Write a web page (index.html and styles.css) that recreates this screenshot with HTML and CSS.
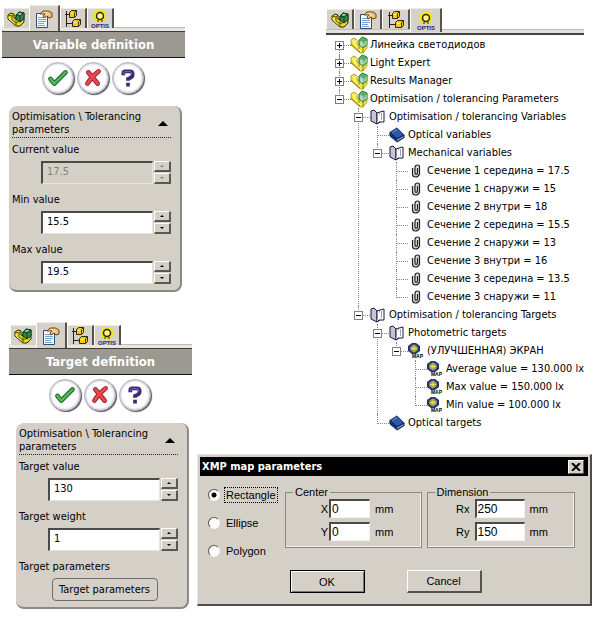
FILE: index.html
```html
<!DOCTYPE html>
<html lang="en">
<head>
<meta charset="utf-8">
<title>Optimisation parameters</title>
<link rel="stylesheet" href="styles.css">
</head>
<body>
<svg class="sprite" aria-hidden="true">
  <symbol id="part" viewBox="0 0 18 18">
    <path d="M1 5 4 3 7 4V8L9 9V5L12 2 17 3V12L13 16H9L1 9Z" fill="#eadb22" stroke="#2c2806"/>
    <path d="M1 5 5 6V10L9 13V16M5 6 7 4M9 9V13L13 11" fill="none" stroke="#5c5410"/>
    <path d="M9 5 12 2 17 3V9L13 12 9 9Z" fill="#2f8a4c" stroke="#143c20"/>
    <path d="M9 5 13 6V12M13 6 17 3" fill="none" stroke="#143c20"/>
    <path d="M11 4 12.500 3 15 3.500 13 5Z" fill="#b8dcc0"/>
    <path d="M2 7V8.500L7 13" fill="none" stroke="#fff7a0"/>
  </symbol>
  <symbol id="assembly" viewBox="0 0 18 18">
    <path d="M1 4 4 2 7 4V8L9 9V4L12 1 17 3V12L13 17H10L1 9Z" fill="#f4e636" stroke="#b4a628"/>
    <path d="M2 4.500 5 6V10L11 15M5 6 7 4" fill="none" stroke="#fffcb4"/>
    <path d="M1 8 10 16M13 11V17M9 9V13" fill="none" stroke="#8c8128"/>
    <path d="M9 4 12 1 17 3V9L13 12 9 9Z" fill="#58ad68" stroke="#3f8a4c"/>
    <path d="M10 5 13 6V11L10 9Z" fill="#e4f3e2"/>
    <path d="M14 7V10M16 5V9" stroke="#d9f0d8"/>
    <path d="M11 5V9M13 6V11" stroke="#7db887"/>
  </symbol>
  <symbol id="properties" viewBox="0 0 18 18">
    <path d="M1.500 3.500H12.500V17.500H1.500Z" fill="#f4faff" stroke="#28507c"/>
    <path d="M3 7.500H11M3 9.500H11M3 11.500H11M3 13.500H9M3 15.500H10" stroke="#7aa4d0"/>
    <path d="M5 4 8 1H14L17 3V7L14 8 12 6 9 8 8 6 10 4Z" fill="#e8bd82" stroke="#704818"/>
    <path d="M9 2.500H13M11 4.500H14" stroke="#fbe3b8"/>
  </symbol>
  <symbol id="config" viewBox="0 0 18 18">
    <path d="M2.500 1V17M1 4.500H6M2.500 13.500H9" fill="none" stroke="#222"/>
    <path d="M5.500 2.500 7.500 .5H12.500V5.500L10.500 7.500H5.500ZM8.500 11.500 10.500 9.500H16.500V14.500L14.500 16.500H8.500Z" fill="#f3c820" stroke="#302800"/>
    <path d="M10.500 7.500V2.500L12.500 .5M14.500 16.500V11.500L16.500 9.500" fill="none" stroke="#4e3f08"/>
    <path d="M7 3.500H9M10 12.500H13" stroke="#fff29a"/>
  </symbol>
  <symbol id="optis" viewBox="0 0 20 20">
    <path d="M7 1H13L16 4V10L13 13H7L4 10V4Z" fill="#f2e713"/>
    <circle cx="10" cy="7" r="3.500" fill="#fff58a" stroke="#28250c" stroke-width="1.500"/>
    <path d="M8 11V13M12 11V13" stroke="#28250c"/>
    <text x="10" y="19" text-anchor="middle" class="optis-text">OPTIS</text>
  </symbol>
  <symbol id="open-book" viewBox="0 0 16 16">
    <path d="M1 2 4 1 7 4V15L1 12Z" fill="#c4c4d4" stroke="#181840"/>
    <path d="M7 4 10 3V13L7 15Z" fill="#fff" stroke="#181840"/>
    <path d="M10 3 14 2V13H9L7 15" fill="#fff" stroke="#181840"/>
    <path d="M11.500 4V11" stroke="#a0a0b8"/>
  </symbol>
  <symbol id="closed-book" viewBox="0 0 18 16">
    <path d="M1 5 9 0 17 8 9 12Z" fill="#2d57ab" stroke="#12245c"/>
    <path d="M1 5V9L9 16 17 11V8L9 12Z" fill="#17306e" stroke="#12245c"/>
    <path d="M9 14 16 10" stroke="#d2daec"/>
    <path d="M4 5 9 2" stroke="#7094d8"/>
  </symbol>
  <symbol id="clip" viewBox="0 0 10 14">
    <path d="M1.500 4V10Q1.500 13 4.500 13T8.500 10V3Q8.500 1 6.500 1T4 3V9Q4 10.500 5 10.500T6.500 9V4" fill="#ddd" stroke="#222" stroke-width="1.200"/>
  </symbol>
  <symbol id="map" viewBox="0 0 16 16">
    <path d="M4 0H8L12 3V8L8 11H4L0 8V3Z" fill="#25306e"/>
    <path d="M5 1.500H7L10 4V7L7 9.500H5L2 7V4Z" fill="#7c8190"/>
    <path d="M6 2.500V8.500M3 5.500H9M4 3.500 8 7.500M8 3.500 4 7.500" stroke="#eee630"/>
    <text x="9.500" y="15" text-anchor="middle" class="map-text">MAP</text>
  </symbol>
  <symbol id="check" viewBox="0 0 32 32">
    <path d="M8 17 12 22 24 10" fill="none" stroke="#17632a" stroke-width="5" stroke-linecap="round" stroke-linejoin="round"/>
    <path d="M8 17 12 22 24 10" fill="none" stroke="#52b556" stroke-width="3" stroke-linecap="round" stroke-linejoin="round"/>
  </symbol>
  <symbol id="cross" viewBox="0 0 32 32">
    <path d="M11 10 21 22M22 9Q15 14 10 22" fill="none" stroke="#a3202c" stroke-width="5" stroke-linecap="round"/>
    <path d="M11 10 21 22M22 9Q15 14 10 22" fill="none" stroke="#e84850" stroke-width="3" stroke-linecap="round"/>
  </symbol>
  <symbol id="help" viewBox="0 0 32 32">
    <path d="M11 13V11Q11 9 13 9H18Q21 9 21 12T18 16L16 17V19M16 21V25" fill="none" stroke="#3c2a78" stroke-width="4"/>
    <path d="M11 12Q11 9 14 9H18Q20 9 20 12" fill="none" stroke="#7a68b8"/>
  </symbol>
</svg>

<main class="page">
  <div class="side">
    <section class="panel">
      <div class="tabs">
        <button class="tab" aria-label="Parts"><svg class="icon18"><use href="#part"/></svg></button>
        <button class="tab active" aria-label="Properties"><svg class="icon18"><use href="#properties"/></svg></button>
        <button class="tab" aria-label="Configurations"><svg class="icon18"><use href="#config"/></svg></button>
        <button class="tab" aria-label="Optis"><svg class="icon20"><use href="#optis"/></svg></button>
      </div>
      <h2 class="heading">Variable definition</h2>
      <div class="actions">
        <button class="round" aria-label="Accept"><svg><use href="#check"/></svg></button>
        <button class="round" aria-label="Reject"><svg><use href="#cross"/></svg></button>
        <button class="round" aria-label="Help"><svg><use href="#help"/></svg></button>
      </div>
      <div class="group">
        <button class="group-title"><span>Optimisation \ Tolerancing parameters</span><i class="collapse"></i></button>
        <label for="current">Current value</label>
        <div class="spin"><input id="current" value="17.5" disabled><div class="arrows"><button class="up" aria-label="Increase" disabled></button><button class="down" aria-label="Decrease" disabled></button></div></div>
        <label for="min">Min value</label>
        <div class="spin"><input id="min" value="15.5"><div class="arrows"><button class="up" aria-label="Increase"></button><button class="down" aria-label="Decrease"></button></div></div>
        <label for="max">Max value</label>
        <div class="spin"><input id="max" value="19.5"><div class="arrows"><button class="up" aria-label="Increase"></button><button class="down" aria-label="Decrease"></button></div></div>
      </div>
    </section>

    <section class="panel second">
      <div class="tabs">
        <button class="tab" aria-label="Parts"><svg class="icon18"><use href="#part"/></svg></button>
        <button class="tab active" aria-label="Properties"><svg class="icon18"><use href="#properties"/></svg></button>
        <button class="tab" aria-label="Configurations"><svg class="icon18"><use href="#config"/></svg></button>
        <button class="tab" aria-label="Optis"><svg class="icon20"><use href="#optis"/></svg></button>
      </div>
      <h2 class="heading">Target definition</h2>
      <div class="actions">
        <button class="round" aria-label="Accept"><svg><use href="#check"/></svg></button>
        <button class="round" aria-label="Reject"><svg><use href="#cross"/></svg></button>
        <button class="round" aria-label="Help"><svg><use href="#help"/></svg></button>
      </div>
      <div class="group">
        <button class="group-title"><span>Optimisation \ Tolerancing parameters</span><i class="collapse"></i></button>
        <label for="target">Target value</label>
        <div class="spin"><input id="target" value="130"><div class="arrows"><button class="up" aria-label="Increase"></button><button class="down" aria-label="Decrease"></button></div></div>
        <label for="weight">Target weight</label>
        <div class="spin"><input id="weight" value="1"><div class="arrows"><button class="up" aria-label="Increase"></button><button class="down" aria-label="Decrease"></button></div></div>
        <p class="caption">Target parameters</p>
        <button class="params">Target parameters</button>
      </div>
    </section>
  </div>

  <div class="content">
    <section class="browser">
      <div class="tabs tree-tabs">
        <button class="tab" aria-label="Parts"><svg class="icon18"><use href="#part"/></svg></button>
        <button class="tab" aria-label="Properties"><svg class="icon18"><use href="#properties"/></svg></button>
        <button class="tab" aria-label="Configurations"><svg class="icon18"><use href="#config"/></svg></button>
        <button class="tab active" aria-label="Optis"><svg class="icon20"><use href="#optis"/></svg></button>
      </div>
      <ul class="tree">
        <li><div class="row"><button class="toggle plus" aria-label="Expand"></button><svg class="icon18"><use href="#assembly"/></svg><span>Линейка светодиодов</span></div></li>
        <li><div class="row"><button class="toggle plus" aria-label="Expand"></button><svg class="icon18"><use href="#assembly"/></svg><span>Light Expert</span></div></li>
        <li><div class="row"><button class="toggle plus" aria-label="Expand"></button><svg class="icon18"><use href="#assembly"/></svg><span>Results Manager</span></div></li>
        <li><div class="row"><button class="toggle" aria-label="Collapse"></button><svg class="icon18"><use href="#assembly"/></svg><span>Optimisation / tolerancing Parameters</span></div>
          <ul>
            <li><div class="row"><button class="toggle" aria-label="Collapse"></button><svg class="icon16"><use href="#open-book"/></svg><span>Optimisation / tolerancing Variables</span></div>
              <ul>
                <li><div class="row"><i></i><svg class="icon16"><use href="#closed-book"/></svg><span>Optical variables</span></div></li>
                <li><div class="row"><button class="toggle" aria-label="Collapse"></button><svg class="icon16"><use href="#open-book"/></svg><span>Mechanical variables</span></div>
                  <ul>
                    <li><div class="row"><i></i><svg class="clip"><use href="#clip"/></svg><span>Сечение 1 середина = 17.5</span></div></li>
                    <li><div class="row"><i></i><svg class="clip"><use href="#clip"/></svg><span>Сечение 1 снаружи = 15</span></div></li>
                    <li><div class="row"><i></i><svg class="clip"><use href="#clip"/></svg><span>Сечение 2 внутри = 18</span></div></li>
                    <li><div class="row"><i></i><svg class="clip"><use href="#clip"/></svg><span>Сечение 2 середина = 15.5</span></div></li>
                    <li><div class="row"><i></i><svg class="clip"><use href="#clip"/></svg><span>Сечение 2 снаружи = 13</span></div></li>
                    <li><div class="row"><i></i><svg class="clip"><use href="#clip"/></svg><span>Сечение 3 внутри = 16</span></div></li>
                    <li><div class="row"><i></i><svg class="clip"><use href="#clip"/></svg><span>Сечение 3 середина = 13.5</span></div></li>
                    <li><div class="row"><i></i><svg class="clip"><use href="#clip"/></svg><span>Сечение 3 снаружи = 11</span></div></li>
                  </ul>
                </li>
              </ul>
            </li>
            <li><div class="row"><button class="toggle" aria-label="Collapse"></button><svg class="icon16"><use href="#open-book"/></svg><span>Optimisation / tolerancing Targets</span></div>
              <ul>
                <li><div class="row"><button class="toggle" aria-label="Collapse"></button><svg class="icon16"><use href="#open-book"/></svg><span>Photometric targets</span></div>
                  <ul>
                    <li><div class="row"><button class="toggle" aria-label="Collapse"></button><svg class="icon16"><use href="#map"/></svg><span>(УЛУЧШЕННАЯ) ЭКРАН</span></div>
                      <ul>
                        <li><div class="row"><i></i><svg class="icon16"><use href="#map"/></svg><span>Average value = 130.000 lx</span></div></li>
                        <li><div class="row"><i></i><svg class="icon16"><use href="#map"/></svg><span>Max value = 150.000 lx</span></div></li>
                        <li><div class="row"><i></i><svg class="icon16"><use href="#map"/></svg><span>Min value = 100.000 lx</span></div></li>
                      </ul>
                    </li>
                  </ul>
                </li>
                <li><div class="row"><i></i><svg class="icon16"><use href="#closed-book"/></svg><span>Optical targets</span></div></li>
              </ul>
            </li>
          </ul>
        </li>
      </ul>
    </section>

    <section class="dialog" role="dialog" aria-labelledby="dialog-title">
      <header class="titlebar">
        <h2 id="dialog-title">XMP map parameters</h2>
        <button class="close" aria-label="Close"><svg viewBox="0 0 10 8"><path d="M1 0 9 8M9 0 1 8" stroke="#000" stroke-width="2"/></svg></button>
      </header>
      <form class="form">
        <div class="shapes">
          <label><input type="radio" name="shape" checked><span class="focused">Rectangle</span></label>
          <label><input type="radio" name="shape"><span>Ellipse</span></label>
          <label><input type="radio" name="shape"><span>Polygon</span></label>
        </div>
        <fieldset>
          <legend>Center</legend>
          <div class="fields">
            <label for="cx">X</label><input id="cx" value="0"><span>mm</span>
            <label for="cy">Y</label><input id="cy" value="0"><span>mm</span>
          </div>
        </fieldset>
        <fieldset>
          <legend>Dimension</legend>
          <div class="fields wide">
            <label for="rx">Rx</label><input id="rx" value="250"><span>mm</span>
            <label for="ry">Ry</label><input id="ry" value="150"><span>mm</span>
          </div>
        </fieldset>
        <div class="buttons">
          <button type="button" class="push default">OK</button>
          <button type="button" class="push">Cancel</button>
        </div>
      </form>
    </section>
  </div>
</main>
</body>
</html>
```
FILE: styles.css
```css
* { box-sizing: border-box; }

body {
  margin: 0;
  background: #fff;
  color: #000;
  font: 11px/14px "DejaVu Sans Condensed", "DejaVu Sans", sans-serif;
}

button, input { font: inherit; color: inherit; margin: 0; padding: 0; }
button { border: 0; background: none; }
h2, p, ul { margin: 0; padding: 0; }
ul { list-style: none; }
svg { display: block; }

.sprite { display: none; }
.icon16 { width: 16px; height: 16px; }
.icon18 { width: 18px; height: 18px; }
.icon20 { width: 22px; height: 20px; }
.optis-text { font: bold 6px "Liberation Sans", sans-serif; fill: #2a2470; }
.map-text { font: bold 5px "Liberation Sans", sans-serif; fill: #000; }

.page {
  display: grid;
  grid-template-columns: 192px 1fr;
  gap: 5px;
}

/* Property panels */
.side {
  display: flex;
  flex-direction: column;
  gap: 30px;
  padding: 5px 7px 0 2px;
}
.second { margin: 0 -7px 0 7px; }

.tabs {
  display: flex;
  align-items: flex-end;
  height: 26px;
  padding: 0 0 3px 1px;
  background: linear-gradient(#bcbcbc, #bcbcbc) 0 22px / 100% 1px no-repeat, linear-gradient(#e9e6e0, #e9e6e0) 0 23px / 100% 3px no-repeat;
}
.tab {
  display: flex;
  align-items: center;
  justify-content: center;
  width: 27px;
  height: 20px;
  background: #d6d2c9;
  border-right: 2px solid #55534e;
  border-top: 1px solid #eceae5;
  border-left: 1px solid #fff;
}
.tab:first-child { width: 26px; border-right-color: #d6d2c9; }
.tab.active {
  width: 31px;
  height: 26px;
  margin-bottom: -3px;
  border-right-color: #55534e;
}

.heading {
  height: 27px;
  background: #9b9992;
  border-top: 1px solid #3b3a37;
  border-bottom: 1px solid #111;
  color: #fff;
  font: bold 13px/25px "DejaVu Sans Condensed", "DejaVu Sans", sans-serif;
  text-align: center;
}

.actions {
  display: flex;
  justify-content: center;
  gap: 3px;
  padding: 4px 2px 12px 0;
}
.round {
  width: 32px;
  height: 32px;
  border-radius: 50%;
  border: 1px solid #b5b2bd;
  background: #fff;
  box-shadow: inset 0 0 2px 1px #c9c6d3, 1px 1px 1px #55535a;
}
.round svg { width: 30px; height: 30px; }

.group {
  display: flex;
  flex-direction: column;
  margin: 0 3px 0 7px;
  padding: 4px 9px 2px 3px;
  background: #d4d0c8;
  border-radius: 8px;
  border-right: 2px solid #8b8983;
  border-bottom: 2px solid #8b8983;
}
.group-title {
  display: flex;
  align-items: center;
  justify-content: space-between;
  padding-bottom: 1px;
  border-bottom: 1px dotted #222;
  text-align: left;
  line-height: 13px;
}
.group-title span { width: 136px; }
.collapse {
  margin-right: 3px;
  border: 5px solid transparent;
  border-top: 0;
  border-bottom-color: #000;
}
.group > label, .caption { margin: 5px 0 4px; line-height: 14px; }
.spin { display: flex; gap: 1px; height: 23px; margin: 0 0 4px 29px; }
.spin input {
  flex: 1;
  min-width: 0;
  padding: 0 0 2px 4px;
  background: #fff;
  border: 1px solid #e8e5de;
  border-top: 2px solid #4c4a46;
  border-left: 2px solid #4c4a46;
}
.spin input:disabled { background: #d4d0c8; color: #85827b; }
.arrows { display: flex; flex-direction: column; gap: 1px; width: 17px; }
.arrows button {
  display: flex;
  flex: 1;
  align-items: center;
  justify-content: center;
  border: 1px solid #fff;
  border-right: 2px solid #5a5853;
  border-bottom: 2px solid #5a5853;
  background: #d4d0c8;
}
.arrows button::after { content: ""; border: 2px solid transparent; }
.arrows .up::after { border-top: 0; border-bottom-color: #000; }
.arrows .down::after { border-bottom: 0; border-top-color: #000; }
.arrows .up:disabled::after { border-bottom-color: #85827b; }
.arrows .down:disabled::after { border-top-color: #85827b; }
.params {
  align-self: center;
  width: 106px;
  height: 23px;
  margin: 0 0 4px 12px;
  border: 1px solid #6d6b66;
  border-radius: 4px;
  white-space: nowrap;
}

/* Feature tree */
.content { display: flex; flex-direction: column; }
.browser { margin: 8px 11px 0 129px; }
.tree-tabs {
  height: 27px;
  padding: 0 0 4px;
  border-bottom: 2px solid #454341;
  background: linear-gradient(#bcbcbc, #bcbcbc) 0 21px / 100% 1px no-repeat, linear-gradient(#e4e0d9, #e4e0d9) 0 22px / 100% 3px no-repeat;
}
.tree-tabs .tab, .tree-tabs .tab:first-child { width: 28px; border-right-color: #55534e; }
.tree-tabs .tab.active { width: 32px; height: 24px; }

.tree { padding: 1px 0 0 4px; }
.tree ul { padding-left: 19px; }
.tree li { position: relative; }
.tree li::before {
  content: "";
  position: absolute;
  left: 9px;
  top: 0;
  height: 100%;
  border-left: 1px dotted #888;
}
.tree li:last-child::before { height: 10px; }
.tree > li:first-child::before { top: 9px; }
.row {
  position: relative;
  display: grid;
  grid-template-columns: 19px 19px 1fr;
  align-items: center;
  justify-items: center;
  height: 18px;
  white-space: nowrap;
}
.row::before {
  content: "";
  position: absolute;
  left: 10px;
  top: 9px;
  width: 11px;
  border-top: 1px dotted #888;
}
.row svg { position: relative; }
.row span { justify-self: stretch; padding-left: 2px; line-height: 18px; }
.clip { width: 10px; height: 14px; }
.toggle {
  position: relative;
  width: 9px;
  height: 9px;
  border: 1px solid #808080;
  background: linear-gradient(#000, #000) 1px 3px / 5px 1px no-repeat, #fff;
}
.toggle.plus {
  background: linear-gradient(#000, #000) 1px 3px / 5px 1px no-repeat, linear-gradient(#000, #000) 3px 1px / 1px 5px no-repeat, #fff;
}

/* Map parameters dialog */
.dialog {
  margin: 22px 3px 0 0;
  padding: 2px;
  background: #d4d0c8;
  border: 1px solid #e6e3dd;
  border-right: 2px solid #504e4a;
  border-bottom: 2px solid #504e4a;
  font: 11px/14px "Liberation Sans", sans-serif;
}
.titlebar {
  display: flex;
  align-items: center;
  justify-content: space-between;
  height: 19px;
  padding: 0 4px 0 2px;
  background: #000;
  color: #fff;
}
.titlebar h2 { font: bold 11px/19px "DejaVu Sans Condensed", "DejaVu Sans", sans-serif; }
.close {
  display: flex;
  align-items: center;
  justify-content: center;
  width: 16px;
  height: 14px;
  background: #d4d0c8;
  border: 1px solid #fff;
  border-right-color: #555;
  border-bottom-color: #555;
}
.close svg { width: 10px; height: 8px; }
.form {
  display: grid;
  grid-template-columns: 72px 137fr 149fr;
  column-gap: 5px;
  padding: 9px 13px 9px 8px;
}
.shapes { display: flex; flex-direction: column; gap: 14px; padding-top: 3px; }
.shapes label { display: flex; align-items: center; gap: 5px; height: 14px; }
.shapes input {
  appearance: none;
  width: 12px;
  height: 12px;
  border-radius: 50%;
  border: 1px solid;
  border-color: #555 #f4f2ee #f4f2ee #555;
  background: #fff;
}
.shapes input:checked { background: radial-gradient(circle, #000 2px, #fff 3px); }
.shapes span { padding: 0 1px; }
.focused { outline: 1px dotted #000; }
fieldset {
  min-width: 0;
  margin: 0;
  padding: 0;
  border: 1px solid #8a8780;
  box-shadow: inset -1px -1px #f4f2ee;
  height: 63px;
}
legend { margin-left: 7px; padding: 0 2px; line-height: 14px; }
.fields {
  display: grid;
  grid-template-columns: 43px 41px 1fr;
  row-gap: 4px;
  align-items: center;
}
.fields.wide { grid-template-columns: 47px 50px 1fr; }
.fields label { justify-self: end; padding-right: 1px; }
.fields.wide label { padding-right: 5px; }
.fields input {
  width: 100%;
  height: 19px;
  padding: 0 0 1px 1px;
  border: 1px solid #f4f2ee;
  border-top: 2px solid #4c4a46;
  border-left: 2px solid #4c4a46;
  background: #fff;
  font-size: 12px;
}
.fields span { padding-left: 5px; }
.buttons {
  grid-column: 1 / -1;
  display: flex;
  gap: 42px;
  justify-content: center;
  padding: 12px 12px 0 0;
}
.push {
  width: 75px;
  height: 23px;
  border: 1px solid #fff;
  border-right: 2px solid #55534e;
  border-bottom: 2px solid #55534e;
  background: #d4d0c8;
}
.push.default { border: 1px solid #000; box-shadow: inset 1px 1px #fff, inset -1px -1px #777; }
```
